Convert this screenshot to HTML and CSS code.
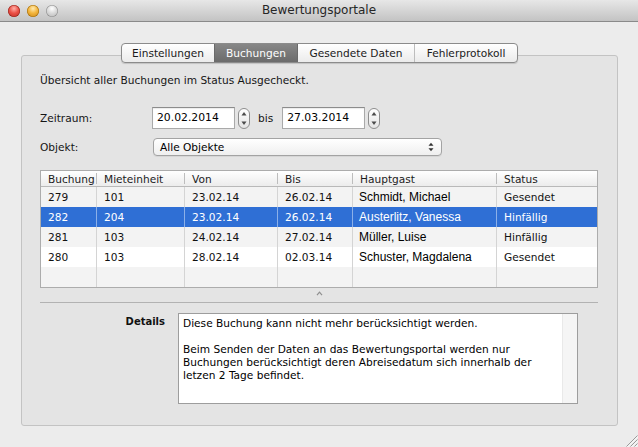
FILE: index.html
```html
<!DOCTYPE html>
<html lang="de">
<head>
<meta charset="utf-8">
<title>Bewertungsportale</title>
<link rel="stylesheet" href="styles.css">
</head>
<body>
<div class="window">
  <header class="titlebar">
    <div class="lights">
      <span class="light red"></span>
      <span class="light yellow"></span>
      <span class="light gray"></span>
    </div>
    <div class="title">Bewertungsportale</div>
    <div></div>
  </header>
  <main class="content">
    <nav class="tabs">
      <div class="tab t1">Einstellungen</div>
      <div class="tab t2 active">Buchungen</div>
      <div class="tab t3">Gesendete Daten</div>
      <div class="tab t4">Fehlerprotokoll</div>
    </nav>
    <section class="box">
      <p class="intro">Übersicht aller Buchungen im Status Ausgecheckt.</p>
      <div class="row row-date">
        <span class="label">Zeitraum:</span>
        <span class="field">20.02.2014</span>
        <span class="stepper"><svg width="6" height="15" viewBox="0 0 6 15"><path d="M0.5 4.5 L3 1 L5.5 4.5 Z" fill="#4a4a4a"/><path d="M0.5 10.5 L3 14 L5.5 10.5 Z" fill="#4a4a4a"/></svg></span>
        <span class="bis">bis</span>
        <span class="field">27.03.2014</span>
        <span class="stepper"><svg width="6" height="15" viewBox="0 0 6 15"><path d="M0.5 4.5 L3 1 L5.5 4.5 Z" fill="#4a4a4a"/><path d="M0.5 10.5 L3 14 L5.5 10.5 Z" fill="#4a4a4a"/></svg></span>
      </div>
      <div class="row row-obj">
        <span class="label">Objekt:</span>
        <span class="popup">
          <span class="popup-text">Alle Objekte</span>
          <svg width="6" height="10" viewBox="0 0 6 10"><path d="M0.5 3.8 L3 0.8 L5.5 3.8 Z" fill="#333"/><path d="M0.5 6.2 L3 9.2 L5.5 6.2 Z" fill="#333"/></svg>
        </span>
      </div>
      <div class="table">
        <div class="tr head">
          <div class="td">Buchung</div>
          <div class="td">Mieteinheit</div>
          <div class="td">Von</div>
          <div class="td">Bis</div>
          <div class="td">Hauptgast</div>
          <div class="td last">Status</div>
        </div>
        <div class="tr odd">
          <div class="td">279</div><div class="td">101</div><div class="td">23.02.14</div><div class="td">26.02.14</div><div class="td name">Schmidt, Michael</div><div class="td last">Gesendet</div>
        </div>
        <div class="tr selected">
          <div class="td">282</div><div class="td">204</div><div class="td">23.02.14</div><div class="td">26.02.14</div><div class="td name">Austerlitz, Vanessa</div><div class="td last">Hinfällig</div>
        </div>
        <div class="tr odd">
          <div class="td">281</div><div class="td">103</div><div class="td">24.02.14</div><div class="td">27.02.14</div><div class="td name">Müller, Luise</div><div class="td last">Hinfällig</div>
        </div>
        <div class="tr">
          <div class="td">280</div><div class="td">103</div><div class="td">28.02.14</div><div class="td">02.03.14</div><div class="td name">Schuster, Magdalena</div><div class="td last">Gesendet</div>
        </div>
        <div class="tr odd">
          <div class="td"></div><div class="td"></div><div class="td"></div><div class="td"></div><div class="td name"></div><div class="td last"></div>
        </div>
      </div>
      <div class="scroll-hint"><svg width="7" height="5" viewBox="0 0 7 5"><path d="M1 4.2 L3.5 1.2 L6 4.2" fill="none" stroke="#8f8f8f" stroke-width="1.2"/></svg></div>
      <div class="sep"></div>
      <div class="details">
        <span class="details-label">Details</span>
        <div class="textarea">
          <div class="textarea-text">Diese Buchung kann nicht mehr berücksichtigt werden.<br><br>Beim Senden der Daten an das Bewertungsportal werden nur<br>Buchungen berücksichtigt deren Abreisedatum sich innerhalb der<br>letzen 2 Tage befindet.</div>
          <div class="textarea-track"></div>
        </div>
      </div>
    </section>
  </main>
  <svg class="grip" width="14" height="14" viewBox="0 0 14 14">
    <path d="M13.5 2.5 L2.5 13.5 M13.5 6.5 L6.5 13.5 M13.5 10.5 L10.5 13.5" stroke="#9a9a9a" stroke-width="1"/>
    <path d="M14 3.5 L3.5 14 M14 7.5 L7.5 14 M14 11.5 L11.5 14" stroke="#ffffff" stroke-width="0.8"/>
  </svg>
</div>
</body>
</html>
```

FILE: styles.css
```css
* { box-sizing: border-box; }
html, body { margin: 0; padding: 0; }
body {
  width: 638px;
  height: 447px;
  overflow: hidden;
  background: #ececec;
  font-family: "DejaVu Sans", "Noto Sans", sans-serif;
  font-size: 10.6px;
  color: #111;
}
.window {
  position: relative;
  width: 638px;
  height: 447px;
  display: flex;
  flex-direction: column;
}
.titlebar {
  height: 22px;
  flex: none;
  border-bottom: 1px solid #8a8a8a;
  background: linear-gradient(#e7e7e7, #c3c3c3);
  display: grid;
  grid-template-columns: 1fr auto 1fr;
  align-items: center;
}
.lights { display: flex; gap: 7px; padding-left: 8px; }
.light { width: 12px; height: 12px; border-radius: 50%; }
.red { background: radial-gradient(circle at 50% 30%, #ffb0a8 0, #ec5147 45%, #b92a22 100%); box-shadow: inset 0 0 0 0.6px #962720; }
.yellow { background: radial-gradient(circle at 50% 30%, #ffeab0 0, #f3b53c 45%, #c88414 100%); box-shadow: inset 0 0 0 0.6px #a6700f; }
.gray { background: radial-gradient(circle at 50% 30%, #ffffff 0, #dadada 45%, #b2b2b2 100%); box-shadow: inset 0 0 0 0.6px #8f8f8f; }
.title { font-size: 12px; color: #262626; line-height: 21px; }

.content {
  flex: 1;
  display: flex;
  flex-direction: column;
  padding: 21px 20px 0 21px;
}
.tabs {
  align-self: center;
  display: flex;
  height: 20px;
  border: 1px solid #8b8b8b;
  border-radius: 4px;
  overflow: hidden;
  position: relative;
  z-index: 1;
  background: linear-gradient(#ffffff, #ebebeb);
  box-shadow: 0 1px 1px rgba(0,0,0,0.15);
  color: #1a1a1a;
}
.tab {
  display: flex;
  align-items: center;
  justify-content: center;
  border-left: 1px solid #bdbdbd;
}
.tab.t1 { width: 92px; border-left: none; }
.tab.t2 { width: 83px; }
.tab.t3 { width: 117px; }
.tab.t4 { width: 103px; }
.tab.active {
  background: linear-gradient(#878787, #6b6b6b);
  color: #fff;
  border-left-color: #6a6a6a;
}
.tab.active + .tab { border-left-color: #6a6a6a; }

.box {
  margin-top: -8px;
  height: 371px;
  border: 1px solid #c3c3c3;
  border-radius: 3px;
  background: #e4e4e4;
  padding: 17px 19px 0 18px;
  display: flex;
  flex-direction: column;
}
.intro { margin: 0; line-height: 14px; color: #151515; }

.row { display: flex; align-items: center; }
.label { width: 112px; flex: none; color: #151515; }
.row-date { margin-top: 20px; height: 22px; }
.field {
  width: 83px;
  height: 22px;
  background: #fff;
  border: 1px solid #a9a9a9;
  border-top-color: #8c8c8c;
  padding-left: 4px;
  font-size: 10.8px;
  line-height: 20px;
  color: #000;
  box-shadow: inset 0 1px 1px rgba(0,0,0,0.08);
}
.stepper {
  margin-left: 3px;
  width: 12px;
  height: 21px;
  border: 1px solid #8e8e8e;
  border-radius: 6px;
  background: linear-gradient(#ffffff, #e4e4e4);
  display: flex;
  align-items: center;
  justify-content: center;
}
.bis { margin: 0 9px 0 8px; color: #151515; }

.row-obj { margin-top: 9px; height: 18px; }
.popup {
  margin-left: 1px;
  width: 289px;
  height: 18px;
  border: 1px solid #a3a3a3;
  border-radius: 4px;
  background: linear-gradient(#ffffff, #efefef);
  box-shadow: 0 1px 0 rgba(0,0,0,0.06);
  display: flex;
  align-items: center;
  justify-content: space-between;
  padding: 0 7px 0 6px;
  color: #000;
}

.table {
  margin-top: 14px;
  border: 1px solid #acacac;
  background: #fff;
  width: 558px;
}
.tr {
  display: grid;
  grid-template-columns: 56px 88px 93px 75px 144px 1fr;
  height: 20px;
}
.td {
  border-right: 1px solid #d4d4d4;
  padding-left: 7px;
  display: flex;
  align-items: center;
  white-space: nowrap;
  overflow: hidden;
  color: #111;
}
.td.last { border-right: none; }
.td.name { font-family: "Liberation Sans", Arial, sans-serif; font-size: 12px; padding-left: 6px; color: #000; }
.tr.head {
  height: 16px;
  border-bottom: 1px solid #b9b9b9;
  background: linear-gradient(#ffffff, #ececec);
}
.tr.head .td {
  border-right: none;
  background: linear-gradient(#bdbdbd, #bdbdbd) right 2px / 1px 11px no-repeat;
  color: #1c1c1c;
}
.tr.head .td.last { background: none; }
.tr.odd { background: #f3f3f3; }
.tr.selected { background: #2f6fd5; }
.tr.selected .td { color: #fff; border-right-color: rgba(255,255,255,0.45); }

.scroll-hint {
  height: 14px;
  display: flex;
  justify-content: center;
  padding-top: 3px;
}
.sep { height: 1px; background: #b2b2b2; }

.details { margin-top: 10px; display: flex; align-items: flex-start; }
.details-label {
  width: 125px;
  flex: none;
  text-align: right;
  font-weight: bold;
  font-size: 10px;
  padding-top: 3px;
  color: #111;
}
.textarea {
  margin-left: 13px;
  width: 400px;
  height: 91px;
  border: 1px solid #9d9d9d;
  background: #fff;
  display: flex;
}
.textarea-text {
  flex: 1;
  padding: 3px 0 0 4px;
  line-height: 13px;
  color: #000;
  white-space: nowrap;
}
.textarea-track {
  width: 15px;
  background: #f5f5f5;
  border-left: 1px solid #e9e9e9;
}
.grip { position: absolute; right: 0; bottom: 0; }
```
